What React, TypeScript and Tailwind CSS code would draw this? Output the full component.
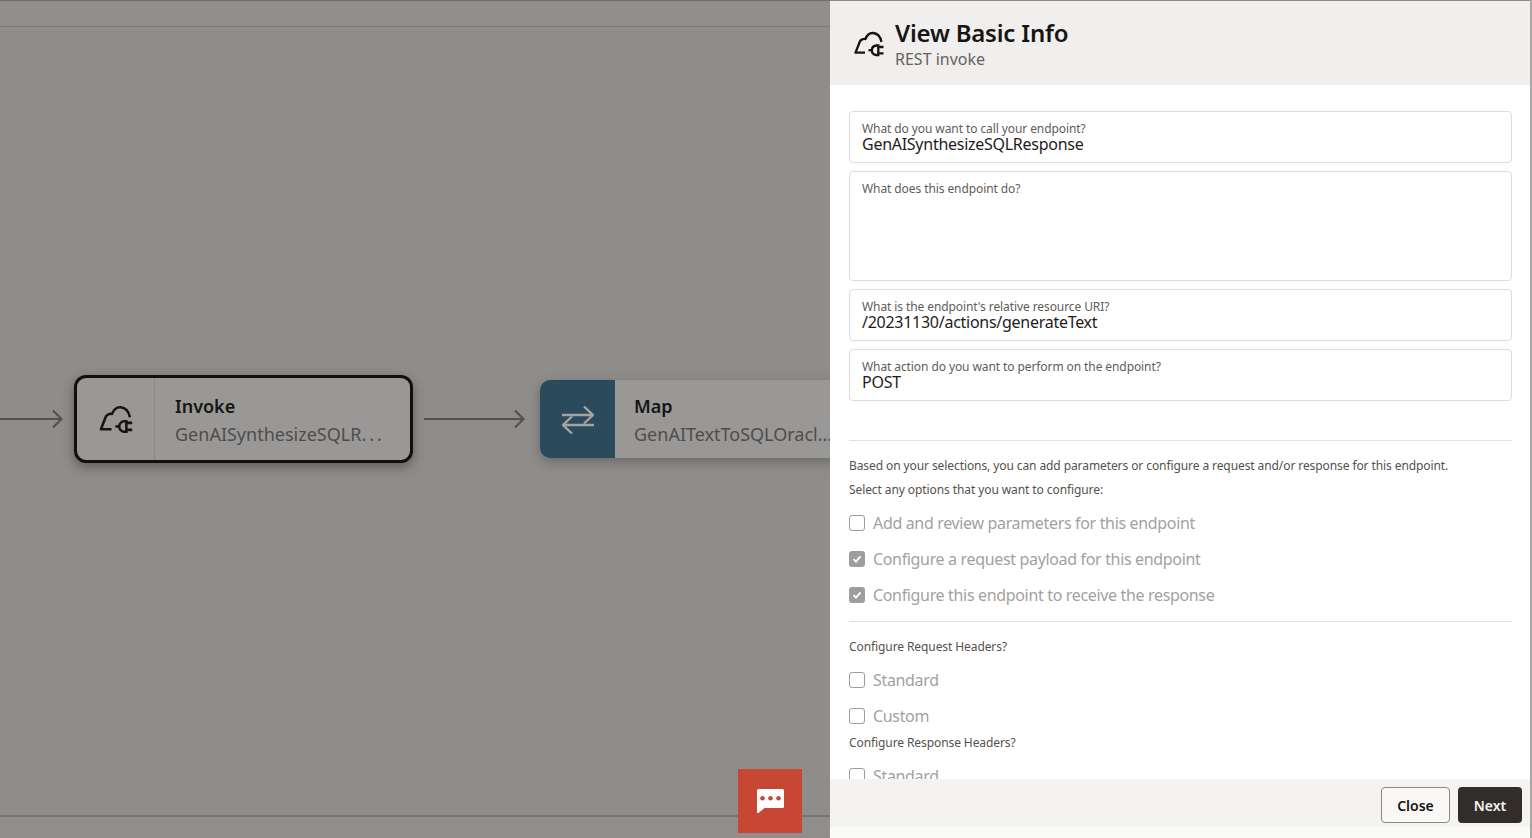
import React from 'react';

const FONT = "font-['Noto_Sans','Open_Sans',sans-serif]";

function InvokeIcon({ className }: { className?: string }) {
  return (
    <svg viewBox="0 0 30 26" fill="none" stroke="currentColor" strokeWidth="2.3" className={className}>
      <path d="M11 21.700 H1.500 L5.500 11.500 C6 9 9 7.500 11.500 8 C13 4 16 1.800 19 2 C23.500 2.300 26.500 6 27.500 11" strokeLinejoin="round" />
      <path d="M14.500 19.200 H18" />
      <path d="M24.300 14.500 H22 A4.800 4.800 0 0 0 22 24 H24.300 Z" />
      <path d="M24.300 16 H29.500 M24.300 22.300 H29.500" />
    </svg>
  );
}

function FlowArrow({ width }: { width: number }) {
  return (
    <svg width={width} height="20" viewBox={`0 0 ${width} 20`} fill="none" stroke="#54514e" strokeWidth="2.2" className="shrink-0">
      <path d={`M0 10 H${width - 1}`} />
      <path d={`M${width - 10} 1.500 L${width - 1.500} 10 L${width - 10} 18.500`} />
    </svg>
  );
}

function Field({ label, value, tall }: { label: string; value?: string; tall?: boolean }) {
  return (
    <div className={`rounded-[4px] border border-[#dedcda] bg-white px-[12px] pt-[9px] ${tall ? 'h-[110px]' : 'h-[52px]'}`}>
      <div className="text-[12px] leading-[16px] tracking-[-0.09px] text-[#5f5c59]">{label}</div>
      {value ? <div className="text-[16px] leading-[15px] tracking-[-0.27px] text-[#1f1c1a]">{value}</div> : null}
    </div>
  );
}

function Check({ label, checked }: { label: string; checked?: boolean }) {
  return (
    <div className="flex h-[36px] shrink-0 items-center gap-[8px]">
      {checked ? (
        <span className="flex h-[16px] w-[16px] items-center justify-center rounded-[3px] bg-[#a09e9c]">
          <svg viewBox="0 0 12 12" className="h-[12px] w-[12px]" fill="none" stroke="#fff" strokeWidth="1.8">
            <path d="M2.500 6.200 L5 8.700 L9.500 3.300" />
          </svg>
        </span>
      ) : (
        <span className="h-[16px] w-[16px] rounded-[3px] border border-[#9f9d9b] bg-white" />
      )}
      <span className="text-[16px] leading-[20px] tracking-[-0.34px] text-[#a3a19f]">{label}</span>
    </div>
  );
}

function Node({ title, sub, selected }: { title: string; sub: string; selected?: boolean }) {
  if (selected) {
    return (
      <div className="flex h-[88px] w-[339px] shrink-0 rounded-[12px] border-[3px] border-[#12100f] bg-[#999897] shadow-[0_4px_12px_rgba(0,0,0,0.35)]">
        <div className="flex w-[78px] shrink-0 items-center justify-center border-r border-[#8a8987]">
          <InvokeIcon className="h-[29px] w-[34px] text-[#161513]" />
        </div>
        <div className="pl-[20px] pt-[15px]">
          <div className="text-[18px] font-semibold leading-[26px] text-[#161513]">{title}</div>
          <div className="pt-[1px] text-[18px] leading-[29px] text-[#4f4d4b]">
            {sub}
            <span className="tracking-[3px]">...</span>
          </div>
        </div>
      </div>
    );
  }
  return (
    <div className="flex h-[78px] w-[339px] shrink-0 overflow-hidden rounded-[10px] bg-[#999897] shadow-[0_4px_12px_rgba(0,0,0,0.25)]">
      <div className="flex w-[75px] shrink-0 items-center justify-center bg-[#2b4b5c]">
        <svg viewBox="0 0 32 29" className="h-[29px] w-[32px]" fill="none" stroke="#a3a3a1" strokeWidth="2.4">
          <path d="M0 10 H31 M22 1.500 L31 10 L22 18.500" />
          <path d="M32 20 H1 M10 11.500 L1 20 L10 28.500" />
        </svg>
      </div>
      <div className="pl-[19px] pt-[13px]">
        <div className="text-[18px] font-semibold leading-[26px] text-[#161513]">{title}</div>
        <div className="whitespace-nowrap pt-[1px] text-[18px] leading-[28px] text-[#4f4d4b]">{sub}</div>
      </div>
    </div>
  );
}

export default function App() {
  return (
    <div className={`flex h-[838px] w-[1532px] overflow-hidden bg-[#8e8d8b] ${FONT}`}>
      {/* canvas behind the drawer */}
      <div className="relative flex w-[830px] shrink-0 flex-col overflow-hidden">
        <div className="h-[1px] bg-[#6f6e6c]" />
        <div className="h-[26px] border-b border-[#7b7a78] bg-[#918f8d]" />
        <div className="flex h-[790px] shrink-0 items-center border-b-2 border-[#777674] pb-[4px]">
          <div className="flex items-center">
            <FlowArrow width={63} />
            <div className="ml-[11px]">
              <Node selected title="Invoke" sub="GenAISynthesizeSQLR" />
            </div>
            <div className="ml-[11px]">
              <FlowArrow width={101} />
            </div>
            <div className="ml-[15px]">
              <Node title="Map" sub="GenAITextToSQLOracl..." />
            </div>
          </div>
        </div>
        <div className="flex-1 bg-[#8f8e8c]" />
        {/* feedback button */}
        <div className="absolute left-[738px] top-[769px] flex h-[64px] w-[64px] items-center justify-center bg-[#c74634]">
          <svg viewBox="0 0 27 24" className="h-[24px] w-[27px]">
            <path d="M1.500 0 H25.500 A1.500 1.500 0 0 1 27 1.500 V17.500 A1.500 1.500 0 0 1 25.500 19 H7.500 L2 23.600 A1 1 0 0 1 0 23 V1.500 A1.500 1.500 0 0 1 1.500 0 Z" fill="#fff" />
            <circle cx="5.500" cy="9.300" r="2.300" fill="#c74634" />
            <circle cx="13.500" cy="9.300" r="2.300" fill="#c74634" />
            <circle cx="21.500" cy="9.300" r="2.300" fill="#c74634" />
          </svg>
        </div>
      </div>

      {/* drawer */}
      <div className="flex w-[702px] shrink-0 flex-col border-r-2 border-[#a8a7a5] bg-white">
        <div className="flex h-[85px] shrink-0 border-t border-[#8e8d8b] bg-[#f1efed]">
          <div className="flex w-[65px] shrink-0 justify-end pr-[11px] pt-[30px]">
            <InvokeIcon className="h-[26px] w-[30px] text-[#161513]" />
          </div>
          <div className="pt-[16px]">
            <div className="text-[24px] font-semibold leading-[32px] tracking-[-0.2px] text-[#161513]">View Basic Info</div>
            <div className="text-[16px] leading-[20px] text-[#65625f]">REST invoke</div>
          </div>
        </div>

        <div className="h-[694px] shrink-0 overflow-hidden pl-[19px] pr-[18px] pt-[26px]">
          <div className="flex flex-col gap-[8px]">
            <Field label="What do you want to call your endpoint?" value="GenAISynthesizeSQLResponse" />
            <Field tall label="What does this endpoint do?" />
            <Field label="What is the endpoint's relative resource URI?" value="/20231130/actions/generateText" />
            <Field label="What action do you want to perform on the endpoint?" value="POST" />
          </div>
          <div className="mt-[39px] border-t border-[#e4e2e0] pt-[17px] text-[12px] leading-[16px] tracking-[-0.09px] text-[#54514e]">
            Based on your selections, you can add parameters or configure a request and/or response for this endpoint.
          </div>
          <div className="mt-[8px] text-[12px] leading-[16px] tracking-[-0.09px] text-[#54514e]">Select any options that you want to configure:</div>
          <div className="mt-[7px] flex flex-col">
            <Check label="Add and review parameters for this endpoint" />
            <Check checked label="Configure a request payload for this endpoint" />
            <Check checked label="Configure this endpoint to receive the response" />
          </div>
          <div className="mt-[8px] border-t border-[#e4e2e0] pt-[17px] text-[12px] leading-[16px] tracking-[-0.09px] text-[#54514e]">Configure Request Headers?</div>
          <div className="mt-[7px] flex flex-col">
            <Check label="Standard" />
            <Check label="Custom" />
          </div>
          <div className="mt-[1px] text-[12px] leading-[16px] tracking-[-0.09px] text-[#54514e]">Configure Response Headers?</div>
          <div className="mt-[7px] flex flex-col">
            <Check label="Standard" />
          </div>
        </div>

        <div className="flex h-[48px] shrink-0 items-end justify-end gap-[8px] bg-[#f4f3f1] pb-[4px] pr-[8px]">
          <button className="h-[36px] w-[69px] rounded-[4px] border border-[#8b8987] bg-[#f9f8f7] text-[14px] font-semibold text-[#161513]">Close</button>
          <button className="h-[36px] w-[64px] rounded-[4px] bg-[#312d2a] text-[14px] font-semibold text-[#f5f4f2]">Next</button>
        </div>
        <div className="flex-1 bg-[#fafaf9]" />
      </div>
    </div>
  );
}
